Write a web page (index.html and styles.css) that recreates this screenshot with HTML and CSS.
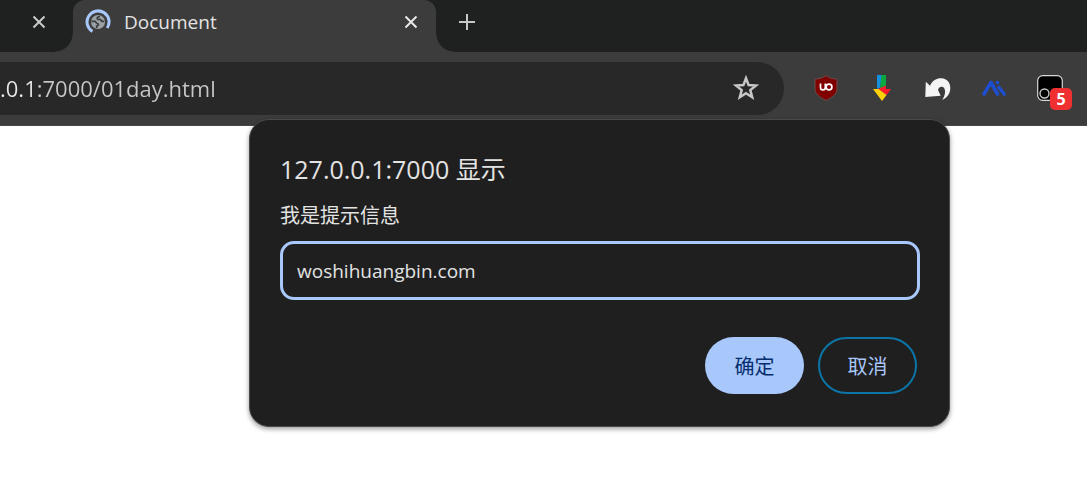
FILE: index.html
```html
<!DOCTYPE html>
<html lang="zh-CN">
<head>
    <meta charset="UTF-8">
    <meta name="viewport" content="width=device-width, initial-scale=1.0">
    <title>Document</title>
    <link rel="stylesheet" href="styles.css">
</head>
<body>
    <header class="browser">
        <div class="tabs">
            <div class="tab-prev">
                <button type="button" class="icon-btn" aria-label="关闭">
                    <svg width="14" height="14" viewBox="0 0 14 14"><path d="M1.5 1.5l11 11M12.5 1.5l-11 11" stroke="#c9cac9" stroke-width="2"/></svg>
                </button>
            </div>
            <div class="tab">
                <svg class="favicon" width="26" height="26" viewBox="0 0 26 26">
                    <path d="M7.500 22.400A11 11 0 1 1 22.200 19" fill="none" stroke="#a8c7fa" stroke-width="3"/>
                    <circle cx="13" cy="13" r="7" fill="#9aa0a6"/>
                    <path d="M6.500 12.300h3.200c1.300 0 1.200 2 2.600 2.200 1.800.2 1.300 2.300-.6 2.500v2M14.800 7.300l-2.300 1.200c-.8.600 0 2 1.200 2h1.600c1 0 .6 1.800 1.900 1.800h2" fill="none" stroke="#3c3c3c" stroke-width="1.700"/>
                </svg>
                <span class="tab-title">Document</span>
                <button type="button" class="icon-btn" aria-label="关闭">
                    <svg width="14" height="14" viewBox="0 0 14 14"><path d="M1.5 1.5l11 11M12.5 1.5l-11 11" stroke="#e8e8e8" stroke-width="2"/></svg>
                </button>
            </div>
            <button type="button" class="icon-btn new-tab" aria-label="新标签页">
                <svg width="16" height="16" viewBox="0 0 16 16"><path d="M8 0v16M0 8h16" stroke="#c7c7c7" stroke-width="2"/></svg>
            </button>
        </div>
        <div class="toolbar">
            <div class="address">
                <input type="text" class="url" value=".0.1:7000/01day.html" aria-label="地址">
                <button type="button" class="icon-btn" aria-label="收藏">
                    <svg width="26" height="26" viewBox="0 0 26 26"><path d="M13 3.200l2.600 6.900 7.400.4-5.700 4.600 1.900 7.100-6.200-4-6.200 4 1.900-7.100L3 10.500l7.400-.4z" fill="none" stroke="#c7c7c7" stroke-width="2.500"/></svg>
                </button>
            </div>
            <div class="extensions">
                <button type="button" class="icon-btn" aria-label="uBlock Origin">
                    <svg width="26" height="26" viewBox="0 0 26 26">
                        <path d="M13 .6c3 2.300 6.500 3.200 11 3.600v9.800c0 5-5 8.500-11 11.400C7 22.500 2 19 2 14V4.200C6.500 3.800 10 2.900 13 .6z" fill="#800000" stroke="#6d4a4a"/>
                        <path d="M7.500 8.500v4a2.400 2.400 0 0 0 4.800 0v-4" fill="none" stroke="#fff" stroke-width="1.700"/>
                        <circle cx="16" cy="12" r="2.900" fill="none" stroke="#fff" stroke-width="1.700"/>
                    </svg>
                </button>
                <button type="button" class="icon-btn" aria-label="下载">
                    <svg width="26" height="26" viewBox="0 0 26 26">
                        <path d="M8 0h5l-2 13-3 1z" fill="#1490df"/>
                        <path d="M12.500 0H17v11l-6 3z" fill="#0aa83f"/>
                        <path d="M17 10.500V14h5l-4.500 6L9 14z" fill="#fb1b2d"/>
                        <path d="M4 14h5.500l8 6-4.500 6z" fill="#ffd20a"/>
                    </svg>
                </button>
                <button type="button" class="icon-btn" aria-label="撤销">
                    <svg width="26" height="26" viewBox="0 0 26 26"><path d="M.8 6.700l4.200 4C7.500 5 12 3 16.500 3.200 22 3.500 25.300 7.500 25.300 13c0 5.500-3.300 9.800-8 12 2.700-4.500 3.500-8.500 2.200-11.300-1.500-3-5.500-2.500-6.500 1.300l2.700 5.800L.3 22z" fill="#f4f4f4"/></svg>
                </button>
                <button type="button" class="icon-btn" aria-label="AI">
                    <svg width="26" height="26" viewBox="0 0 26 26">
                        <path d="M3 19L10 7.500l6.500 11.500M18 12.500l5.200 6.500" fill="none" stroke="#1d4ed0" stroke-width="3.600" stroke-linecap="round" stroke-linejoin="round"/>
                        <circle cx="16.500" cy="7.600" r="1.900" fill="#1d4ed0"/>
                    </svg>
                </button>
                <button type="button" class="icon-btn script" aria-label="脚本">
                    <svg width="26" height="26" viewBox="0 0 26 26">
                        <rect x=".7" y=".7" width="24.600" height="24.600" rx="5" fill="#000" stroke="#d8d8d8" stroke-width="1.200"/>
                        <circle cx="7.500" cy="18.500" r="4.500" fill="none" stroke="#c8c8c8" stroke-width="1.400"/>
                    </svg>
                    <span class="badge">5</span>
                </button>
            </div>
        </div>
    </header>

    <form class="dialog" role="dialog" aria-labelledby="origin">
        <h1 class="origin" id="origin">127.0.0.1:7000 显示</h1>
        <label class="message" for="answer">我是提示信息</label>
        <input type="text" class="answer" id="answer" value="woshihuangbin.com">
        <div class="actions">
            <button type="button" class="btn btn-ok">确定</button>
            <button type="button" class="btn btn-cancel">取消</button>
        </div>
    </form>
</body>
</html>
```

FILE: styles.css
```css
* {
    box-sizing: border-box;
}

body {
    margin: 0;
    background-color: #fff;
    font-family: "Open Sans", "Noto Sans CJK SC", sans-serif;
    overflow: hidden;
}

input,
button {
    font-family: inherit;
}

svg {
    display: block;
}

.icon-btn {
    padding: 0;
    border: none;
    background: none;
}

/* tab strip */
.tabs {
    display: flex;
    align-items: stretch;
    height: 52px;
    background-color: #1f2120;
}

.tab-prev {
    display: flex;
    justify-content: flex-end;
    width: 73px;
    padding: 0 27px 8px 0;
}

.tab {
    position: relative;
    display: flex;
    align-items: center;
    width: 363px;
    padding: 0 18px 8px 12px;
    background-color: #3c3c3c;
    border-radius: 12px 12px 0 0;
}

/* flared feet of the active tab */
.tab::before,
.tab::after {
    content: "";
    position: absolute;
    bottom: 0;
    width: 18px;
    height: 18px;
}

.tab::before {
    right: 100%;
    background: radial-gradient(circle at 0 0, transparent 17px, #3c3c3c 18px);
}

.tab::after {
    left: 100%;
    background: radial-gradient(circle at 100% 0, transparent 17px, #3c3c3c 18px);
}

.tab-title {
    flex: 1;
    margin-left: 13px;
    color: #e3e3e3;
    font-size: 19px;
    line-height: 26px;
}

.new-tab {
    padding: 0 0 8px 23px;
}

/* toolbar */
.toolbar {
    display: flex;
    align-items: center;
    height: 74px;
    padding: 0 24px 1px 0;
    background-color: #3c3c3c;
    border-bottom: 1px solid #484848;
}

.address {
    display: flex;
    flex: 1;
    align-items: center;
    height: 53px;
    padding-right: 25px;
    background-color: #282828;
    border-radius: 0 27px 27px 0;
}

.url {
    flex: 1;
    min-width: 0;
    padding: 0;
    border: none;
    outline: none;
    /* host is brighter than the rest of the address */
    background: linear-gradient(to right, #e8e8e8 36px, #c7c7c7 36px);
    background-clip: text;
    -webkit-background-clip: text;
    color: transparent;
    font-size: 22px;
    line-height: 34px;
}

.extensions {
    display: flex;
    gap: 30px;
    margin-left: 29px;
}

.script {
    position: relative;
}

.badge {
    position: absolute;
    left: 13px;
    top: 13px;
    width: 22px;
    height: 22px;
    border-radius: 5px;
    background-color: #f03030;
    color: #fff;
    font-size: 16px;
    font-weight: 700;
    line-height: 22px;
    text-align: center;
}

/* prompt */
.dialog {
    position: absolute;
    top: 119px;
    left: 249px;
    right: 137px;
    padding: 32px 29px 32px 30px;
    border: 1px solid #4a4a4a;
    border-radius: 20px;
    background-color: #1f1f1f;
    box-shadow: 0 2px 5px rgba(0, 0, 0, .4);
    color: #e3e3e3;
}

.origin {
    margin: 0;
    font-size: 25px;
    font-weight: 400;
    line-height: 34px;
}

.message {
    display: block;
    margin: 15px 0 10px;
    font-size: 20px;
    line-height: 30px;
}

.answer {
    display: block;
    width: 100%;
    height: 59px;
    padding: 0 14px;
    border: 3px solid #a8c7fa;
    border-radius: 14px;
    outline: none;
    background-color: #1f1f1f;
    color: #e3e3e3;
    font-size: 19px;
}

.actions {
    display: flex;
    justify-content: flex-end;
    gap: 14px;
    margin-top: 37px;
    padding-right: 3px;
}

.btn {
    width: 99px;
    height: 57px;
    padding: 0;
    border: none;
    border-radius: 29px;
    font-size: 20px;
}

.btn-ok {
    background-color: #a8c7fa;
    color: #062e6f;
}

.btn-cancel {
    border: 2px solid #0b75a8;
    background-color: #1f1f1f;
    color: #a8c7fa;
}
```
